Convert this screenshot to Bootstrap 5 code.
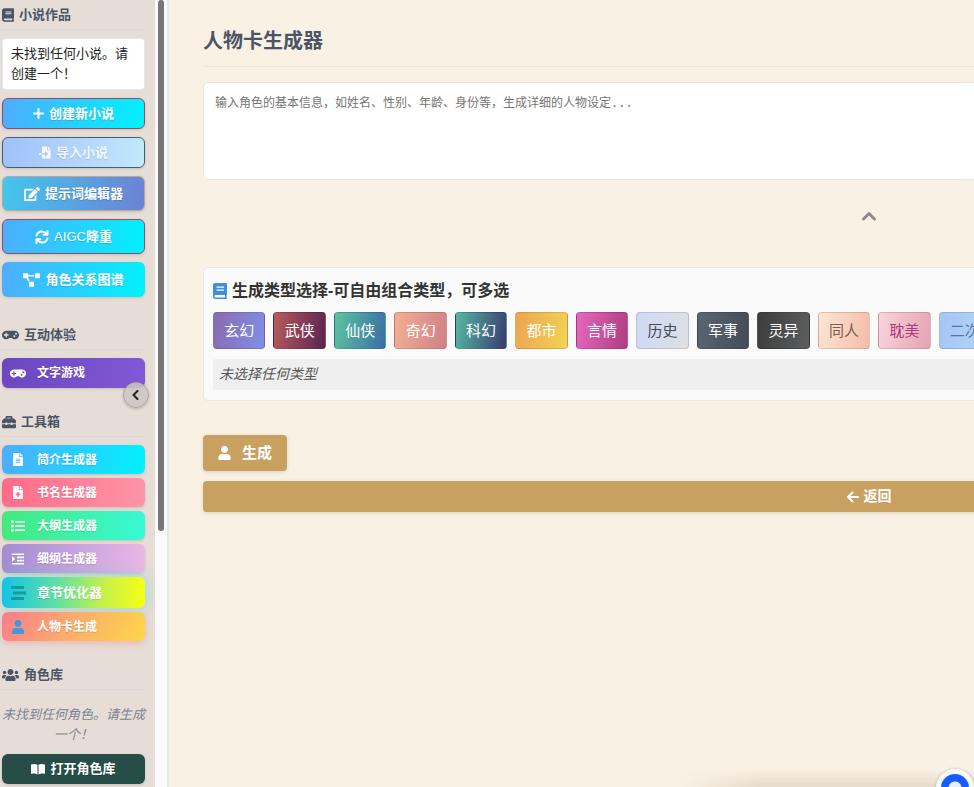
<!DOCTYPE html>
<html lang="zh-CN">
<head>
<meta charset="utf-8">
<meta name="viewport" content="width=device-width, initial-scale=1">
<title>人物卡生成器</title>
<link href="https://cdn.jsdelivr.net/npm/bootstrap@5.3.0/dist/css/bootstrap.min.css" rel="stylesheet">
<style>
body{font-family:"Liberation Sans","Noto Sans CJK SC",sans-serif;background:#f9f2e4;color:#333}
svg{fill:currentColor;flex:none}
.line-art{fill:none;stroke:currentColor;stroke-linecap:round;stroke-linejoin:round}
.side-panel{width:155px;padding:5px 10px 0 2px;background:#e5ddd6;flex:none;overflow:hidden}
.side-title{font-size:13px;line-height:20px;font-weight:700;color:#4a5568;padding-bottom:4px;border-bottom:1px solid #d8d9dc;margin:0 0 8px;gap:5px}
.spaced-title{margin-top:28px}
.empty-box{background:#fff;border:1px solid #e2e8f0;border-radius:4px;padding:5px 8px;font-size:13px;line-height:20px;color:#222}
.side-btn{width:100%;height:35px;padding:0;border-radius:6px;font-size:13px;line-height:20px;font-weight:700;color:#fff;display:flex;align-items:center;justify-content:center;gap:5px;box-shadow:0 1px 3px #0002;text-shadow:0 1px 1px #0002}
.side-btn:hover{color:#fff}
.short{height:31px}
.tool-btn{height:29px;font-size:12px;justify-content:flex-start;padding-left:7px;gap:10px;border:0}
.tool-btn svg{width:18px}
.g-cyan{background:linear-gradient(100deg,#4facfe,#00f2fe)}
.rim-red{border:1px solid #984a68}
.rim-dark{border:1px solid #275a78}
.g-import{background:linear-gradient(100deg,#a0c0fa,#c2e9fb);border:1px solid #406074}
.g-import,.g-import:hover{color:#fffd}
.g-prompt{background:linear-gradient(100deg,#43c6ee,#6c82d4);border:1px solid #b8a999}
.g-game{background:linear-gradient(100deg,#6b46c1,#805ad5);height:30px}
.g-pink{background:linear-gradient(100deg,#ff6b88,#ff94a8)}
.g-green{background:linear-gradient(100deg,#43e97b,#38f9d7)}
.g-lilac{background:linear-gradient(100deg,#a18cd1,#ecb8e8)}
.g-chapter{background:linear-gradient(95deg,#12c2e9,#5fdfa5 38%,#c4f04a 70%,#f9ff14);height:31px;font-size:13px;box-shadow:0 0 15px #40dccb88}
.g-chapter svg{color:#159c9c}
.g-person{background:linear-gradient(120deg,#fa7c8c,#fbac6c 48%,#fed64a);box-shadow:0 2px 6px #ff708066}
.g-person svg{color:#4299d8}
.g-library{background:#264d47;height:30px;border:0}
.fold-btn{position:absolute;right:-4px;bottom:-20px;width:26px;height:26px;padding:0;border:1px solid #aaa5a3;border-radius:50%;background:#cdc6c4e0;color:#222;display:flex;align-items:center;justify-content:center;box-shadow:0 1px 3px #0003}
.no-role{font-size:13px;line-height:20px;font-style:italic;color:#7b8494;margin:15px 0 9px;text-align:center}
.track{width:14px;background:#fafafc;border-right:2px solid #e4e9ea;flex:none;padding:0 3px}
.thumb{width:6px;height:67.5%;background:#7a7678;border-radius:3px}
.content-area{padding:24px 0 0 34px;overflow:hidden;min-width:0}
.sheet{min-width:1332px}
.page-title{font-size:20px;line-height:32px;font-weight:700;color:#4a5568;padding:1px 0 9px;border-bottom:1px solid #eee8dc;margin-bottom:15px}
.role-input{height:98px;padding:10px 11px;font-size:12px;line-height:20px;border:1px solid #e6e8e6;border-radius:5px;resize:none;font-family:"DejaVu Sans Mono","Noto Sans CJK SC",monospace}
.role-input::placeholder{color:#757575}
.dots-up{height:87px;padding-top:30px}
.up-btn,.up-btn:hover{color:#8e8a8b}
.type-card{background:#fafafa;border:1px solid #ebe7e2;border-radius:5px;padding:11px 9px 10px}
.type-title{font-size:16px;line-height:24px;font-weight:700;color:#333;margin:0 0 9px;gap:5px}
.type-title svg{color:#3f8fe0}
.chips{display:grid;grid-auto-flow:column;grid-auto-columns:4%;gap:8px;justify-content:start}
.chip{height:37px;padding:0 10px;min-width:max-content;border:1px solid #0000001f;border-radius:4px;font-size:15px;line-height:24px;color:#fff}
.picked{margin-top:10px;background:#efefef;padding:5px 6px;font-size:14px;line-height:21px;font-style:italic;color:#555;border-radius:3px}
.gold{background:#c8a060;color:#fff;border:0;border-radius:4px;box-shadow:0 1px 4px #0002;display:flex;align-items:center}
.gold:hover{background:#b89050;color:#fff}
.make-btn{margin-top:34px;height:36px;padding:0 15px;font-size:15px;font-weight:700;gap:11px}
.back-btn{margin-top:10px;width:100%;height:31px;font-size:14px;font-weight:700;justify-content:center;gap:5px;padding:0}
.bottom-haze{position:fixed;left:680px;right:0;bottom:0;height:18px;pointer-events:none;background:linear-gradient(#c8b8a800,#c8b8a866);-webkit-mask-image:linear-gradient(90deg,transparent,#000 80px);mask-image:linear-gradient(90deg,transparent,#000 80px)}
.help-btn{position:fixed;right:0;bottom:-20px;width:38px;height:38px;padding:0;border:5px solid #f8f9fb;border-radius:50%;background:radial-gradient(circle,#e8effc 0 6px,#175cff 7px);box-shadow:0 0 3px #0004}
</style>
<script src="https://cdn.jsdelivr.net/npm/bootstrap@5.3.0/dist/js/bootstrap.bundle.min.js"></script>
</head>
<body>
<svg class="d-none" aria-hidden="true">
<symbol id="i-book" viewBox="0 0 448 512"><path d="M448 360V24c0-13.3-10.7-24-24-24H96C43 0 0 43 0 96v320c0 53 43 96 96 96h328c13.3 0 24-10.7 24-24v-16c0-7.5-3.5-14.3-8.9-18.7-4.2-15.4-4.2-59.3 0-74.7 5.4-4.3 8.9-11.1 8.9-18.6zM128 134c0-3.3 2.7-6 6-6h212c3.3 0 6 2.7 6 6v20c0 3.3-2.7 6-6 6H134c-3.3 0-6-2.7-6-6v-20zm0 64c0-3.3 2.7-6 6-6h212c3.3 0 6 2.7 6 6v20c0 3.3-2.7 6-6 6H134c-3.3 0-6-2.7-6-6v-20zm253.4 250H96c-17.7 0-32-14.3-32-32 0-17.6 14.4-32 32-32h285.4c-1.9 17.1-1.9 46.9 0 64z"/></symbol>
<symbol id="i-pad" viewBox="0 0 640 512"><path d="M480.07 96H160a160 160 0 1 0 114.24 272h91.5A160 160 0 1 0 480.07 96zM248 268a12 12 0 0 1-12 12h-52v52a12 12 0 0 1-12 12h-24a12 12 0 0 1-12-12v-52H84a12 12 0 0 1-12-12v-24a12 12 0 0 1 12-12h52v-52a12 12 0 0 1 12-12h24a12 12 0 0 1 12 12v52h52a12 12 0 0 1 12 12zm216 76a40 40 0 1 1 40-40 40 40 0 0 1-40 40zm64-96a40 40 0 1 1 40-40 40 40 0 0 1-40 40z"/></symbol>
<symbol id="i-user" viewBox="0 0 448 512"><path d="M224 256c70.7 0 128-57.3 128-128S294.7 0 224 0 96 57.3 96 128s57.3 128 128 128zm89.6 32h-16.7c-22.2 10.2-46.9 16-72.9 16s-50.6-5.8-72.9-16h-16.7C60.2 288 0 348.2 0 422.4V464c0 26.5 21.5 48 48 48h352c26.5 0 48-21.5 48-48v-41.6c0-74.2-60.2-134.4-134.4-134.4z"/></symbol>
</svg>
<div class="d-flex vh-100 overflow-hidden">
<aside class="side-panel">
  <h2 class="side-title d-flex align-items-center"><svg width="12" height="14"><use href="#i-book"/></svg>小说作品</h2>
  <div class="empty-box mb-2">未找到任何小说。请创建一个！</div>
  <button class="btn side-btn short g-cyan rim-red mb-2"><svg class="line-art" width="11" height="11" viewBox="0 0 11 11" stroke-width="2"><path d="M5.500 1v9M1 5.500h9"/></svg>创建新小说</button>
  <button class="btn side-btn short g-import mb-2"><svg width="12" height="13" viewBox="0 0 512 512"><path fill-rule="evenodd" d="M16 288c-9 0-16 7-16 16v32c0 9 7 16 16 16h112v-64H16zm473-183L407 23c-4-4-10-7-17-7H384v112h112v-6c0-6-2-12-7-17zM352 136V0H152c-13 0-24 11-24 24v264h128v-65c0-14 17-22 27-12l96 97c7 6 7 17 0 24l-96 96c-10 10-27 3-27-12v-64H128v136c0 13 11 24 24 24h320c13 0 24-11 24-24V160H376c-13 0-24-11-24-24z"/></svg>导入小说</button>
  <button class="btn side-btn g-prompt mb-2"><svg width="16" height="14" viewBox="0 0 576 512"><path d="M402.600 83.200l90.200 90.200c3.800 3.800 3.800 10 0 13.800L274.400 405.600l-92.800 10.300c-12.400 1.400-22.900-9.100-21.500-21.500l10.300-92.800L388.800 83.200c3.800-3.800 10-3.800 13.800 0zm162-22.900l-48.800-48.800c-15.200-15.200-39.900-15.200-55.200 0l-35.400 35.400c-3.800 3.800-3.800 10 0 13.800l90.200 90.200c3.800 3.800 10 3.800 13.800 0l35.400-35.400c15.200-15.300 15.200-40 0-55.200zM384 346.200V448H64V128h229.800c3.200 0 6.200-1.300 8.500-3.500l40-40c7.600-7.600 2.200-20.500-8.500-20.500H48C21.500 64 0 85.500 0 112v352c0 26.500 21.500 48 48 48h352c26.500 0 48-21.500 48-48V306.200c0-10.700-12.900-16-20.500-8.500l-40 40c-2.200 2.300-3.500 5.300-3.500 8.500z"/></svg>提示词编辑器</button>
  <button class="btn side-btn g-cyan rim-red mb-2 fw-normal"><svg class="line-art" width="14" height="14" viewBox="0 0 14 14" stroke-width="2"><path d="M1.500 5.500C3 .8 8.500.2 11.500 4M12.500 1v3.800H8.700M12.500 8.500C11 13.200 5.500 13.800 2.500 10M1.500 13V9.200h3.800"/></svg><span>AIGC<b>降重</b></span></button>
  <button class="btn side-btn g-cyan border-0"><svg width="17" height="14" viewBox="0 0 640 512"><path d="M384 320H256c-17.700 0-32 14.300-32 32v128c0 17.700 14.300 32 32 32h128c17.700 0 32-14.300 32-32V352c0-17.700-14.300-32-32-32zM192 32c0-17.700-14.300-32-32-32H32C14.300 0 0 14.300 0 32v128c0 17.700 14.300 32 32 32h95.700l73.200 128C212 301 232.400 288 256 288h.3L192 175.500V128h224V64H192V32zM608 0H480c-17.700 0-32 14.300-32 32v128c0 17.700 14.300 32 32 32h128c17.700 0 32-14.300 32-32V32c0-17.700-14.300-32-32-32z"/></svg>角色关系图谱</button>

  <h2 class="side-title spaced-title d-flex align-items-center"><svg width="17" height="14"><use href="#i-pad"/></svg>互动体验</h2>
  <div class="position-relative mb-4">
    <button class="btn side-btn tool-btn g-game"><svg height="13"><use href="#i-pad"/></svg>文字游戏</button>
    <button class="fold-btn" aria-label="收起侧栏"><svg class="line-art" width="8" height="10" viewBox="0 0 8 10" stroke-width="2"><path d="M5.500 1l-4 4 4 4"/></svg></button>
  </div>

  <h2 class="side-title d-flex align-items-center"><svg width="14" height="14" viewBox="0 0 512 512"><path fill-rule="evenodd" d="M128 128V80c0-26 22-48 48-48h160c26 0 48 22 48 48v48h36c10 0 20 4 28 12l52 52c8 8 12 18 12 28v84H384v-32h-64v32H192v-32h-64v32H0v-84c0-10 4-20 12-28l52-52c8-8 18-12 28-12h36zm64 0h128V96H192v32zM0 336h128v32h64v-32h128v32h64v-32h128v112c0 18-14 32-32 32H32c-18 0-32-14-32-32V336z"/></svg>工具箱</h2>
  <div class="d-flex flex-column gap-1 mb-4">
    <button class="btn side-btn tool-btn g-cyan"><svg height="13" viewBox="0 0 384 512"><path d="M224 136V0H24C10.700 0 0 10.700 0 24v464c0 13.300 10.700 24 24 24h336c13.300 0 24-10.700 24-24V160H248c-13.200 0-24-10.800-24-24zm64 236c0 6.600-5.400 12-12 12H108c-6.600 0-12-5.400-12-12v-8c0-6.600 5.400-12 12-12h168c6.600 0 12 5.400 12 12v8zm0-64c0 6.600-5.400 12-12 12H108c-6.600 0-12-5.400-12-12v-8c0-6.600 5.400-12 12-12h168c6.600 0 12 5.400 12 12v8zm0-72v8c0 6.600-5.400 12-12 12H108c-6.600 0-12-5.400-12-12v-8c0-6.600 5.400-12 12-12h168c6.600 0 12 5.400 12 12zm96-114.100v6.100H256V0h6.100c6.400 0 12.500 2.500 17 7l97.900 98c4.500 4.500 7 10.600 7 16.900z"/></svg>简介生成器</button>
    <button class="btn side-btn tool-btn g-pink"><svg height="13" viewBox="0 0 384 512"><path fill-rule="evenodd" d="M224 136V0H24C11 0 0 11 0 24v464c0 13 11 24 24 24h336c13 0 24-11 24-24V160H248c-13 0-24-11-24-24zM256 0v128h128v-6c0-6-2-12-7-17L279 7c-4-4-10-7-17-7zM160 232h64v64h64v64h-64v64h-64v-64H96v-64h64z"/></svg>书名生成器</button>
    <button class="btn side-btn tool-btn g-green"><svg height="12" viewBox="0 0 14 12"><path d="M0 .5h2.500v2.500H0zM0 4.800h2.500v2.500H0zM0 9h2.500v2.500H0zM4 1h10v1.500H4zM4 5.300h10v1.500H4zM4 9.500h10v1.500H4z"/></svg>大纲生成器</button>
    <button class="btn side-btn tool-btn g-lilac"><svg height="12" viewBox="0 0 12 12"><path d="M0 .5h12v1.600H0zM5 3.600h7v1.600H5zM5 6.800h7v1.600H5zM0 9.900h12v1.600H0zM0 3.200L3.300 6 0 8.800z"/></svg>细纲生成器</button>
    <button class="btn side-btn tool-btn g-chapter"><svg height="14" viewBox="0 0 16 14"><path d="M1 0h13v3H1zM3 5.500h13v3H3zM1 11h13v3H1z"/></svg>章节优化器</button>
    <button class="btn side-btn tool-btn g-person"><svg height="14"><use href="#i-user"/></svg>人物卡生成</button>
  </div>

  <h2 class="side-title d-flex align-items-center"><svg width="17" height="14" viewBox="0 0 640 512"><path d="M96 224c35.300 0 64-28.700 64-64s-28.700-64-64-64-64 28.700-64 64 28.700 64 64 64zm448 0c35.300 0 64-28.700 64-64s-28.700-64-64-64-64 28.700-64 64 28.700 64 64 64zm32 32h-64c-17.600 0-33.500 7.100-45.100 18.600 40.300 22.100 68.900 62 75.100 109.400h66c17.700 0 32-14.300 32-32v-32c0-35.300-28.700-64-64-64zm-256 0c61.900 0 112-50.100 112-112S381.900 32 320 32 208 82.100 208 144s50.100 112 112 112zm76.800 32h-8.300c-20.800 10-43.900 16-68.500 16s-47.600-6-68.500-16h-8.300C179.600 288 128 339.600 128 403.200V432c0 26.500 21.500 48 48 48h288c26.500 0 48-21.500 48-48v-28.800c0-63.600-51.600-115.200-115.200-115.200zm-223.700-13.400C161.500 263.100 145.600 256 128 256H64c-35.300 0-64 28.700-64 64v32c0 17.700 14.300 32 32 32h65.900c6.300-47.400 34.900-87.300 75.200-109.400z"/></svg>角色库</h2>
  <p class="no-role">未找到任何角色。请生成一个！</p>
  <button class="btn side-btn g-library"><svg width="14" height="12" viewBox="0 0 14 12"><path d="M0 1.500C2.500.5 5 .8 6.500 1.800v9.700C5 10.500 2.500 10.300 0 11zM14 1.500C11.500.5 9 .8 7.500 1.800v9.700c1.500-1 4-1.200 6.500-.5z"/></svg>打开角色库</button>
</aside>
<div class="track"><div class="thumb"></div></div>

<main class="content-area flex-grow-1">
  <div class="sheet">
    <h1 class="page-title">人物卡生成器</h1>
    <textarea class="form-control role-input" aria-label="角色的基本信息" placeholder="输入角色的基本信息，如姓名、性别、年龄、身份等，生成详细的人物设定..."></textarea>
    <div class="dots-up d-flex justify-content-center align-items-start"><button class="btn up-btn p-0 border-0 d-flex" aria-label="收起"><svg class="line-art" width="16" height="12" viewBox="0 0 16 12" stroke-width="3"><path d="M2.500 9L8 3.500 13.500 9"/></svg></button></div>
    <section class="type-card">
      <h2 class="type-title d-flex align-items-center"><svg width="14" height="16" viewBox="0 0 14 16"><path fill-rule="evenodd" d="M2 0h11q1 0 1 1v10.500q0 .5-.5.8v2.200q.5.2.5.8 0 .7-.8.700H2.500Q0 16 0 13.500V2Q0 0 2 0zM3.500 3.500v1.200h7.500V3.500zM3.500 6.500v1.200h7.500V6.500zM2.500 12q-1 0-1 1.200t1 1.200H12V12z"/></svg>生成类型选择-可自由组合类型，可多选</h2>
      <div class="chips" id="chips"></div>
      <div class="picked">未选择任何类型</div>
    </section>
    <button class="btn gold make-btn"><svg width="13" height="14"><use href="#i-user"/></svg>生成</button>
    <button class="btn gold back-btn"><svg class="line-art" width="12" height="12" viewBox="0 0 12 12" stroke-width="2"><path d="M11 6H1.500M5.500 1.500L1 6l4.500 4.500"/></svg>返回</button>
  </div>
</main>
</div>
<div class="bottom-haze"></div>
<button class="help-btn" aria-label="助手"></button>
<script>
const types=[["玄幻","#8a6bb0","#7f8fe6"],["武侠","#b85c5c","#5a2350"],["仙侠","#5cc4a0","#3a6ea5"],["奇幻","#f2b090","#d08088"],["科幻","#56b8a4","#383c70"],["都市","#eca550","#f2d355"],["言情","#e568bd","#b03d80"],["历史","#cdd9f5","#dfe0e4","#444b55"],["军事","#5a6673","#434c57"],["灵异","#3c3c3c","#5c5e60"],["同人","#fbe6d2","#f5bca8","#7c5f50"],["耽美","#f8d4dc","#e4a4b2","#b03a80"],["二次元","#a6c4f5","#b8dcf8","#5577a8"]];
for(const [name,from,to,ink] of types){
  const b=document.createElement("button");
  b.className="btn chip";b.textContent=name;
  b.style.background=`linear-gradient(100deg,${from},${to})`;
  if(ink)b.style.color=ink;
  document.getElementById("chips").append(b);
}
</script>
</body>
</html>
